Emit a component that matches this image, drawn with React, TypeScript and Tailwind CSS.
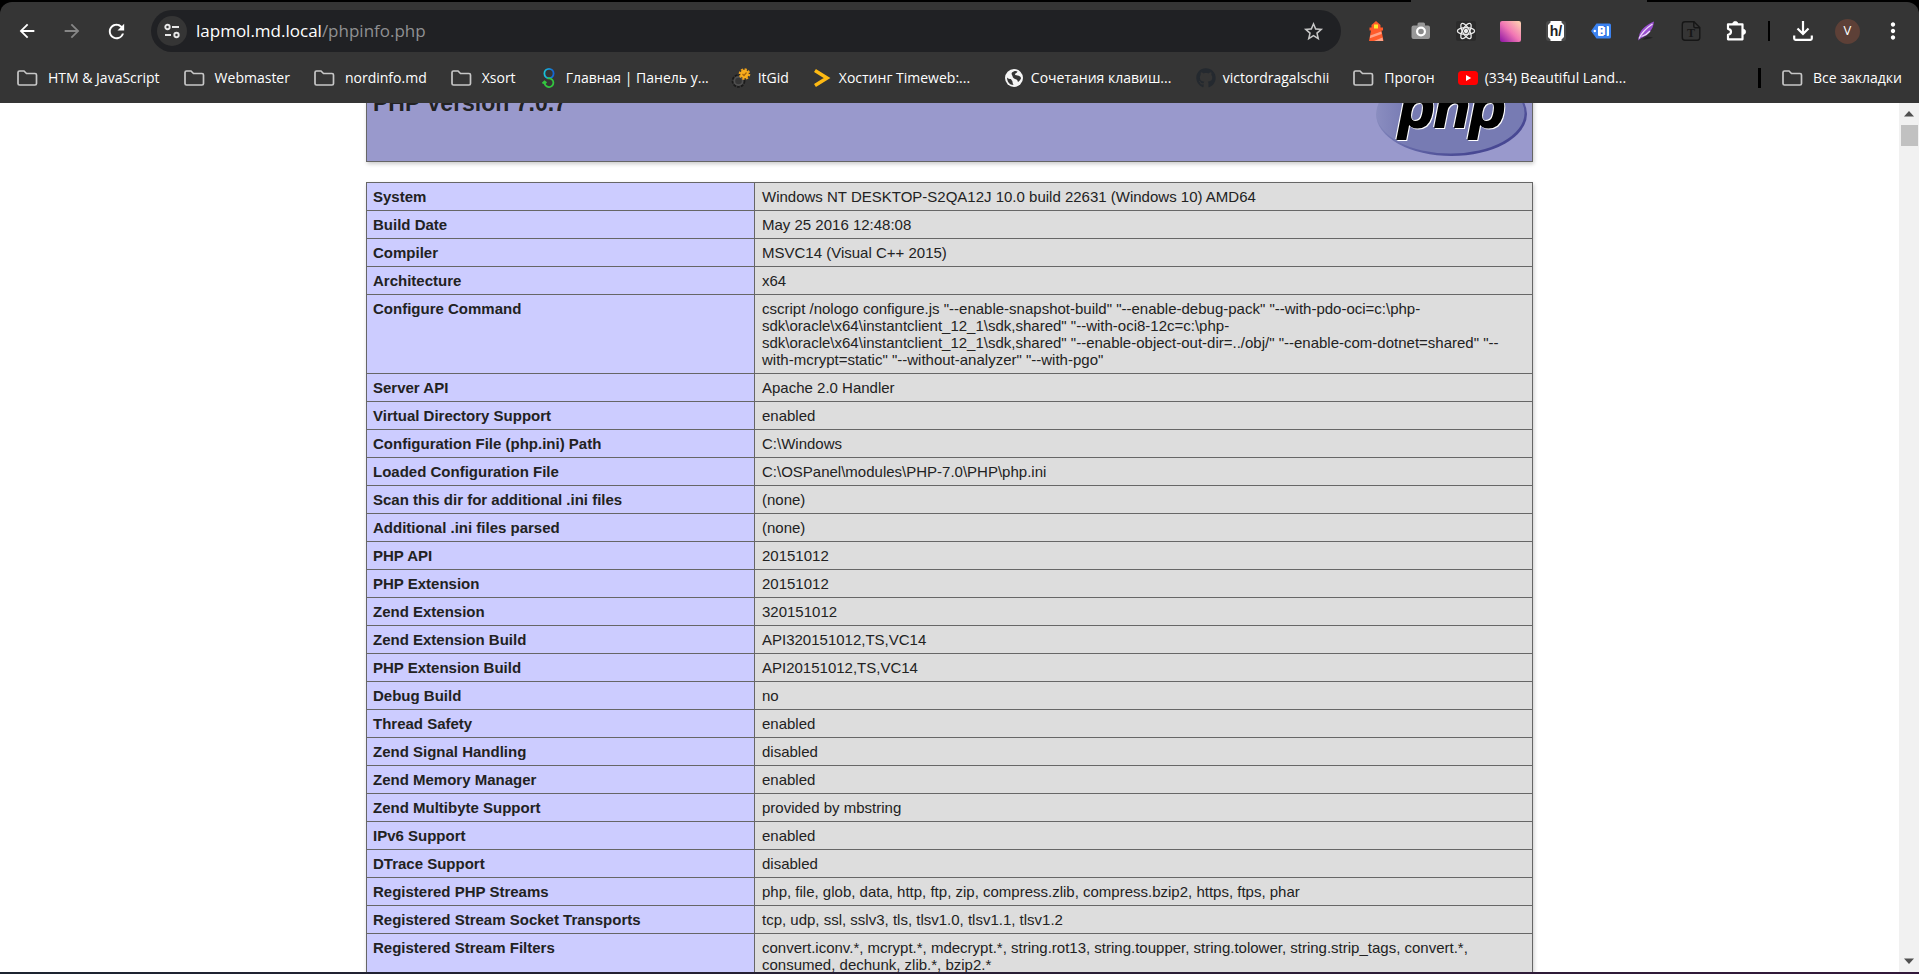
import React from 'react';
import {
  MdArrowBack,
  MdArrowForward,
  MdRefresh,
  MdStarBorder,
  MdMoreVert,
} from 'react-icons/md';
import { FaGithub } from 'react-icons/fa';

interface InfoRow {
  name: string;
  value: string;
}

interface Bookmark {
  title: string;
  icon: React.ReactNode;
  folder?: boolean;
  truncated?: boolean;
}

const rows: InfoRow[] = [
  { name: 'System', value: 'Windows NT DESKTOP-S2QA12J 10.0 build 22631 (Windows 10) AMD64' },
  { name: 'Build Date', value: 'May 25 2016 12:48:08' },
  { name: 'Compiler', value: 'MSVC14 (Visual C++ 2015)' },
  { name: 'Architecture', value: 'x64' },
  {
    name: 'Configure Command',
    value:
      'cscript /nologo configure.js "--enable-snapshot-build" "--enable-debug-pack" "--with-pdo-oci=c:\\php-sdk\\oracle\\x64\\instantclient_12_1\\sdk,shared" "--with-oci8-12c=c:\\php-sdk\\oracle\\x64\\instantclient_12_1\\sdk,shared" "--enable-object-out-dir=../obj/" "--enable-com-dotnet=shared" "--with-mcrypt=static" "--without-analyzer" "--with-pgo"',
  },
  { name: 'Server API', value: 'Apache 2.0 Handler' },
  { name: 'Virtual Directory Support', value: 'enabled' },
  { name: 'Configuration File (php.ini) Path', value: 'C:\\Windows' },
  { name: 'Loaded Configuration File', value: 'C:\\OSPanel\\modules\\PHP-7.0\\PHP\\php.ini' },
  { name: 'Scan this dir for additional .ini files', value: '(none)' },
  { name: 'Additional .ini files parsed', value: '(none)' },
  { name: 'PHP API', value: '20151012' },
  { name: 'PHP Extension', value: '20151012' },
  { name: 'Zend Extension', value: '320151012' },
  { name: 'Zend Extension Build', value: 'API320151012,TS,VC14' },
  { name: 'PHP Extension Build', value: 'API20151012,TS,VC14' },
  { name: 'Debug Build', value: 'no' },
  { name: 'Thread Safety', value: 'enabled' },
  { name: 'Zend Signal Handling', value: 'disabled' },
  { name: 'Zend Memory Manager', value: 'enabled' },
  { name: 'Zend Multibyte Support', value: 'provided by mbstring' },
  { name: 'IPv6 Support', value: 'enabled' },
  { name: 'DTrace Support', value: 'disabled' },
  {
    name: 'Registered PHP Streams',
    value: 'php, file, glob, data, http, ftp, zip, compress.zlib, compress.bzip2, https, ftps, phar',
  },
  {
    name: 'Registered Stream Socket Transports',
    value: 'tcp, udp, ssl, sslv3, tls, tlsv1.0, tlsv1.1, tlsv1.2',
  },
  {
    name: 'Registered Stream Filters',
    value:
      'convert.iconv.*, mcrypt.*, mdecrypt.*, string.rot13, string.toupper, string.tolower, string.strip_tags, convert.*, consumed, dechunk, zlib.*, bzip2.*',
  },
];

const FolderIcon = () => (
  <svg width="22" height="18" viewBox="0 0 22 18" fill="none" stroke="#c7c7c7" strokeWidth="1.700">
    <path d="M2 3.500a1.500 1.500 0 0 1 1.500-1.500h4.500l2.500 2.500h8.500a1.500 1.500 0 0 1 1.500 1.500v8.500a1.500 1.500 0 0 1-1.500 1.500h-15.500a1.500 1.500 0 0 1-1.500-1.500z" />
  </svg>
);

const PanelIcon = () => (
  <svg width="20" height="20" viewBox="0 0 20 20" fill="none" strokeWidth="1.8">
    <defs>
      <linearGradient id="panel-top" x1="0" y1="0" x2="1" y2="0">
        <stop offset="0" stopColor="#19c3d8" />
        <stop offset="1" stopColor="#1463d6" />
      </linearGradient>
    </defs>
    <circle cx="10" cy="5.500" r="4.600" stroke="url(#panel-top)" />
    <path d="M8.500 10.300h1.500a4.400 4.400 0 1 1-4.400 4.200M3.500 15.500l2-2 2 1.500" stroke="#33c63f" />
  </svg>
);

const GearsIcon = () => (
  <svg width="20" height="20" viewBox="0 0 20 20" fill="none">
    <circle cx="7.500" cy="13" r="5.600" stroke="#1b1b1b" strokeWidth="2.500" strokeDasharray="2.500 1.200" />
    <circle cx="7.500" cy="13" r="4.200" stroke="#505050" strokeWidth="1.800" />
    <circle cx="13.500" cy="6" r="4.800" stroke="#f0a21c" strokeWidth="2" strokeDasharray="2.200 1.500" />
    <circle cx="13.500" cy="6" r="4.300" fill="#f7ad1e" />
    <path d="M11.500 6l1.500 1.500 2.500-3" stroke="#a8640a" strokeWidth="1.200" />
  </svg>
);

const ChevronIcon = () => (
  <svg width="20" height="20" viewBox="0 0 20 20" fill="none" stroke="#fdb913" strokeWidth="3.600">
    <path d="M4.500 3.500L15 10 4.500 16.500" strokeLinecap="square" strokeLinejoin="miter" />
  </svg>
);

const GlobeIcon = () => (
  <svg width="20" height="20" viewBox="0 0 20 20">
    <circle cx="10" cy="10" r="9" fill="#f5f5f5" />
    <path d="M3 9.500c1 1.500 2.500 1.500 4 1.500.500 1.500 1.500 1.500 1.500 3 0 1 .500 2 1 3C5.500 17 3 13.500 3 9.500zM8 4.500c1.500-1.500 4-2 5.500-1-.5 1.500-2 1.500-2.500 2.500s1.500 1.500 3 1.500c1.500.500 3 1 3 3-1 2-2 3-3 3.500-.5-1-.5-2-1.500-2.500-2-.5-4-1.500-4-3.500C8 6.500 7 6 8 4.500z" fill="#353535" />
  </svg>
);

const YoutubeIcon = () => (
  <svg width="20" height="20" viewBox="0 0 20 20">
    <rect x="0" y="3" width="20" height="14" rx="3.500" fill="#f00" />
    <path d="M8 7l5.200 3L8 13z" fill="#fff" />
  </svg>
);

const LighthouseIcon = () => (
  <svg width="20" height="20" viewBox="0 0 20 20">
    <path d="M5.500 4L10 0l4.500 4v2.500h2.500v3h-1.500l2 10.500H3l2-10.500H3.500v-3h2z" fill="#ff5b2b" />
    <rect x="8" y="3.500" width="4" height="4" fill="#ffe92e" />
    <path d="M4.300 14.500L15.200 10.500l.500 2.500L3.800 17.200zM8 20l8.500-3.500.600 3.500z" fill="#ffa287" />
  </svg>
);

const CameraIcon = () => (
  <svg width="20" height="20" viewBox="0 0 20 20">
    <path d="M2.500 4.500h4V3A1.500 1.500 0 0 1 8 1.500h4.500A1.500 1.500 0 0 1 14 3v1.500h3a2 2 0 0 1 2 2V16a2 2 0 0 1-2 2H2.500A2 2 0 0 1 .500 16V6.500a2 2 0 0 1 2-2z" fill="#989898" />
    <circle cx="10" cy="10.500" r="3.900" fill="#8a8a8a" stroke="#fff" strokeWidth="2.200" />
  </svg>
);

const AtomIcon = () => (
  <svg width="20" height="20" viewBox="0 0 20 20" fill="none" stroke="#ececec" strokeWidth="1.300">
    <rect width="20" height="20" rx="2" fill="#2b2b2b" stroke="none" />
    <ellipse cx="10" cy="10" rx="8.600" ry="3.400" />
    <ellipse cx="10" cy="10" rx="8.600" ry="3.400" transform="rotate(60 10 10)" />
    <ellipse cx="10" cy="10" rx="8.600" ry="3.400" transform="rotate(120 10 10)" />
    <circle cx="10" cy="10" r="1.500" fill="#ececec" />
  </svg>
);

const GradientIcon = () => (
  <svg width="21" height="21" viewBox="0 0 20 20">
    <defs>
      <linearGradient id="swatch" x1="0" y1="1" x2="1" y2="0">
        <stop offset="0" stopColor="#8b12a4" />
        <stop offset="0.5" stopColor="#f278b4" />
        <stop offset="1" stopColor="#ffd9b0" />
      </linearGradient>
    </defs>
    <rect width="20" height="20" rx="2" fill="url(#swatch)" />
  </svg>
);

const HSlashIcon = () => (
  <svg width="20" height="20" viewBox="0 0 20 20">
    <rect width="20" height="20" rx="3" fill="#4a4a4a" />
    <path d="M4.500 0h11v1.500L18 4v12l-2.500 2.500V20h-11v-1.500L2 16V4l2.500-2.500z" fill="#fff" />
    <text x="10" y="15" textAnchor="middle" fontFamily="Liberation Sans" fontWeight="700" fontSize="14" fill="#222">h/</text>
  </svg>
);

const TagIcon = () => (
  <svg width="20" height="20" viewBox="0 0 20 20">
    <path d="M0 10l5.500-7.500H18.500A1.500 1.500 0 0 1 20 4v12a1.500 1.500 0 0 1-1.500 1.500H5.500z" fill="#3b82f0" />
    <circle cx="3.800" cy="10" r="1.200" fill="#fff" />
    <rect x="7" y="5" width="11" height="10" rx="1" fill="#fff" />
    <text x="12.500" y="13" textAnchor="middle" fontFamily="Liberation Sans" fontWeight="700" fontSize="11" fill="#2c6fe0">:]</text>
  </svg>
);

const FeatherIcon = () => (
  <svg width="20" height="20" viewBox="0 0 20 20">
    <path d="M6 18.500c4 0 8-.5 11-2l-6-1z" fill="#222" />
    <path d="M18 .500C12 3 5 8 3.500 13L2 19.500c4-3.500 8-4 11-7.500 3-3.500 4.500-7 5-11.500z" fill="#9a4fd0" />
    <path d="M16.500 3C12 6 6 11 3 17.500M14 10c-2.500 3-5.500 4.500-8.500 5.500" stroke="#ecd9fa" strokeWidth="1.300" fill="none" />
  </svg>
);

const TextFileIcon = () => (
  <svg width="20" height="20" viewBox="0 0 20 20" fill="none" stroke="#161616" strokeWidth="1.400">
    <path d="M4 .800h9l5.800 5.700V16.500a2.700 2.700 0 0 1-2.700 2.700H4a2.700 2.700 0 0 1-2.700-2.700v-13A2.700 2.700 0 0 1 4 .800zM12.800.800v4.500a1.500 1.500 0 0 0 1.500 1.500h4.500" />
    <text x="10" y="16" textAnchor="middle" fontFamily="Liberation Serif" fontWeight="700" fontSize="12" fill="#161616" stroke="none">T</text>
  </svg>
);

const PuzzleIcon = () => (
  <svg width="22" height="22" viewBox="0 0 22 22">
    <path
      d="M3 4.300h14.500v15H3v-4.500c2-.3 3-1.500 3-3s-1-2.700-3-3z"
      fill="none"
      stroke="#fff"
      strokeWidth="2.200"
      strokeLinejoin="round"
    />
    <path d="M7.700 4a2.600 2.600 0 0 1 5.200 0zM18 9.200a2.600 2.600 0 0 1 0 5.200z" fill="#fff" stroke="#fff" strokeWidth="0.8" />
  </svg>
);

const DownloadIcon = () => (
  <svg width="20" height="20" viewBox="0 0 20 20" fill="none" stroke="#fff" strokeWidth="2.200">
    <path d="M10 0v12M4.500 7.500L10 13l5.500-5.500M1.200 14.500v3a1.300 1.300 0 0 0 1.300 1.300h15a1.300 1.300 0 0 0 1.300-1.300v-3" />
  </svg>
);

const SiteInfoIcon = () => (
  <svg width="16" height="16" viewBox="0 0 16 16" fill="none" stroke="#e8e8e8" strokeWidth="1.900">
    <circle cx="3.500" cy="4" r="2.200" />
    <path d="M8 4h7M1 12h6" />
    <circle cx="12.500" cy="12" r="2.200" />
  </svg>
);

const PhpLogo = () => (
  <svg width="151" height="84" viewBox="0 0 151 84" role="img" aria-label="PHP logo">
    <defs>
      <linearGradient id="php-rim" x1="0" y1="0" x2="1" y2="1">
        <stop offset="0" stopColor="#aeb2d5" />
        <stop offset="0.5" stopColor="#6a6eac" />
        <stop offset="0.8" stopColor="#484893" />
      </linearGradient>
      <linearGradient id="php-body" x1="0" y1="0" x2="1" y2="0">
        <stop offset="0" stopColor="#8a8dc0" />
        <stop offset="0.2" stopColor="#777bb3" />
      </linearGradient>
    </defs>
    <ellipse cx="75.500" cy="42" rx="75.500" ry="42" fill="url(#php-rim)" />
    <ellipse cx="74.500" cy="41" rx="74" ry="40.500" fill="url(#php-body)" />
    <text
      x="76"
      y="55"
      textAnchor="middle"
      fontFamily="Liberation Sans"
      fontWeight="700"
      fontStyle="italic"
      fontSize="58"
      stroke="#000"
      strokeWidth="2"
      fill="#000"
      className="[filter:drop-shadow(1px_1px_0_#fff)_drop-shadow(-1px_-1px_0_#fff)]"
    >
      php
    </text>
  </svg>
);

const bookmarks: Bookmark[] = [
  { title: 'HTM & JavaScript', icon: <FolderIcon />, folder: true },
  { title: 'Webmaster', icon: <FolderIcon />, folder: true },
  { title: 'nordinfo.md', icon: <FolderIcon />, folder: true },
  { title: 'Xsort', icon: <FolderIcon />, folder: true },
  { title: 'Главная | Панель у...', icon: <PanelIcon />, truncated: true },
  { title: 'ItGid', icon: <GearsIcon /> },
  { title: 'Хостинг Timeweb:...', icon: <ChevronIcon />, truncated: true },
  { title: 'Сочетания клавиш...', icon: <GlobeIcon />, truncated: true },
  { title: 'victordragalschii', icon: <FaGithub size={20} color="#24292f" /> },
  { title: 'Прогон', icon: <FolderIcon />, folder: true },
  { title: '(334) Beautiful Land...', icon: <YoutubeIcon />, truncated: true },
];

const extensions = [
  { label: 'Lighthouse', icon: <LighthouseIcon /> },
  { label: 'Screenshot', icon: <CameraIcon /> },
  { label: 'React Developer Tools', icon: <AtomIcon /> },
  { label: 'Color picker', icon: <GradientIcon /> },
  { label: 'Headings', icon: <HSlashIcon /> },
  { label: 'Tag', icon: <TagIcon /> },
  { label: 'Feather', icon: <FeatherIcon /> },
  { label: 'Fonts', icon: <TextFileIcon /> },
  { label: 'Extensions', icon: <PuzzleIcon /> },
];

interface ToolButtonProps {
  label: string;
  children: React.ReactNode;
}

const ToolButton: React.FC<ToolButtonProps> = ({ label, children }) => (
  <button type="button" aria-label={label} className="flex h-10 w-[45px] shrink-0 items-center justify-center">
    {children}
  </button>
);

const Toolbar = () => (
  <div className="flex h-[42px] items-center px-1">
    <ToolButton label="Back"><MdArrowBack size={22} color="#fff" /></ToolButton>
    <ToolButton label="Forward"><MdArrowForward size={22} color="#868686" /></ToolButton>
    <ToolButton label="Reload"><MdRefresh size={23} color="#fff" /></ToolButton>
    <div className="mx-3 flex h-[42px] flex-1 items-center rounded-full bg-[#202124] pl-1.5 pr-4">
      <button type="button" aria-label="Site information" className="flex size-[30px] items-center justify-center rounded-full bg-[#353535]">
        <SiteInfoIcon />
      </button>
      <div className="ml-[9px] flex-1 text-[17px] text-[#8f9092]">
        <span className="text-white">lapmol.md.local</span>/phpinfo.php
      </div>
      <button type="button" aria-label="Bookmark this page">
        <MdStarBorder size={23} color="#c7c7c7" />
      </button>
    </div>
    {extensions.map((ext) => (
      <ToolButton key={ext.label} label={ext.label}>{ext.icon}</ToolButton>
    ))}
    <div className="mx-2.5 h-5 w-0.5 bg-black" />
    <ToolButton label="Downloads"><DownloadIcon /></ToolButton>
    <ToolButton label="Profile">
      <span className="flex size-[25px] items-center justify-center rounded-full bg-[#5d4037] text-[13px] text-white">V</span>
    </ToolButton>
    <ToolButton label="Menu"><MdMoreVert size={26} color="#fff" /></ToolButton>
  </div>
);

const BookmarkLink: React.FC<{ bookmark: Bookmark }> = ({ bookmark }) => (
  <a
    href="#"
    className={`flex items-center whitespace-nowrap ${bookmark.folder ? 'gap-2.5' : 'gap-[7px]'} ${bookmark.truncated ? 'w-[169px]' : ''}`}
  >
    <span className="shrink-0">{bookmark.icon}</span>
    {bookmark.title}
  </a>
);

const BookmarksBar = () => (
  <nav className="flex h-[51px] items-center justify-between pl-4 pr-[17px] text-[14px] text-white">
    <div className="flex items-center gap-[23px]">
      {bookmarks.map((bookmark) => (
        <BookmarkLink key={bookmark.title} bookmark={bookmark} />
      ))}
    </div>
    <div className="flex items-center gap-5">
      <div className="h-5 w-[3px] bg-black" />
      <BookmarkLink bookmark={{ title: 'Все закладки', icon: <FolderIcon />, folder: true }} />
    </div>
  </nav>
);

const InfoPage = () => (
  <main className="flex-1 overflow-hidden bg-white font-['Liberation_Sans',Arial,sans-serif] text-[15px] leading-[17px] text-[#222]">
    {/* the page is scrolled a little, so the heading is cut by the toolbar */}
    <div className="mx-auto -mt-[37px] w-[1167px]">
      <header className="flex h-24 items-start justify-between border border-[#666] bg-[#9999cc] py-[5px] pr-[5px] pl-1.5 shadow-[1px_2px_4px_#ccc]">
        <h1 className="mt-[18px] text-[23px] leading-[27px] font-bold">PHP Version 7.0.7</h1>
        <PhpLogo />
      </header>
      <table className="mt-5 w-full table-fixed border-collapse shadow-[1px_2px_4px_#ccc]">
        <colgroup>
          <col className="w-[388px]" />
          <col />
        </colgroup>
        <tbody>
          {rows.map((row) => (
            <tr key={row.name} className="align-top">
              <th scope="row" className="border border-[#666] bg-[#ccccff] px-1.5 py-[5px] text-left font-bold">{row.name}</th>
              <td className="border border-[#666] bg-[#dddddd] py-[5px] pr-1.5 pl-[7px]">{row.value}</td>
            </tr>
          ))}
        </tbody>
      </table>
    </div>
  </main>
);

const Scrollbar = () => (
  <div className="flex w-5 flex-col items-center justify-between bg-[#f1f1f1]">
    <div className="flex w-full flex-col items-center">
      <svg className="my-2" width="10" height="6" viewBox="0 0 10 6"><path d="M5 0l5 5.500H0z" fill="#505050" /></svg>
      <div className="h-[21px] w-[17px] bg-[#c1c1c1]" />
    </div>
    <svg className="mb-2" width="10" height="6" viewBox="0 0 10 6"><path d="M0 .500h10L5 6z" fill="#505050" /></svg>
  </div>
);

const App: React.FC = () => {
  return (
    <div className="flex h-screen flex-col overflow-hidden font-['Open_Sans','Noto_Sans',sans-serif]">
      <div className="bg-black">
        {/* bottom edge of the active tab */}
        <div className="flex justify-end pr-[272px]">
          <div className="h-0.5 w-[236px] bg-[#353535]" />
        </div>
        <div className="rounded-t-xl bg-[#353535] pt-2">
          <Toolbar />
          <BookmarksBar />
        </div>
      </div>
      <div className="flex min-h-0 flex-1">
        <InfoPage />
        <Scrollbar />
      </div>
      <div className="h-0.5 bg-linear-to-r from-[#1c2430] to-[#32183a]" />
    </div>
  );
};

export default App;
